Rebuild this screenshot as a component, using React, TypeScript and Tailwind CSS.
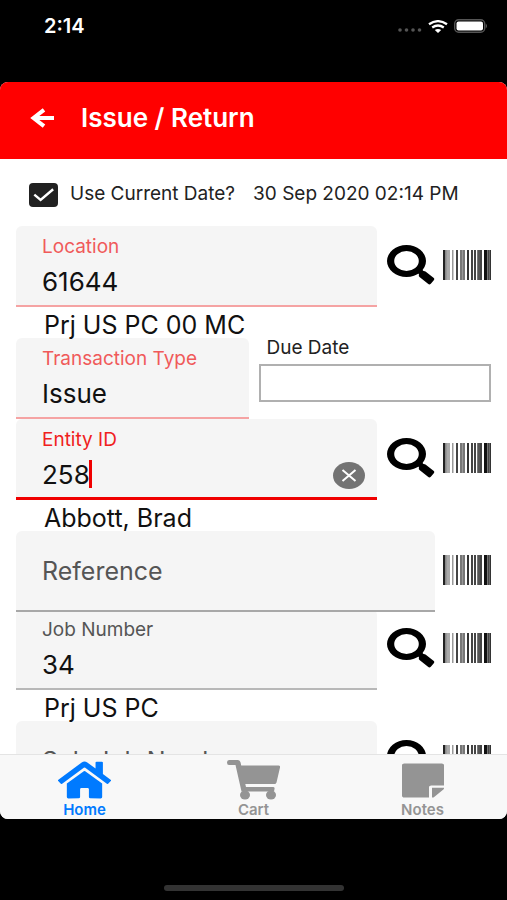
import { useId, type ReactNode } from "react";
import { FaHome, FaStickyNote } from "react-icons/fa";

const BARS: [number, number, string][] = [
  [0, 2, "#222"], [2, 1, "#888"], [3, 1, "#999"], [4, 1, "#aaa"], [5, 2, "#aaa"],
  [9, 1, "#999"], [10, 1, "#ccc"], [13, 2, "#444"], [17, 2, "#777"], [19, 1, "#999"], [20, 2, "#777"],
  [24, 2, "#333"], [28, 2, "#444"], [31, 2, "#444"], [34, 1, "#777"], [35, 2, "#555"], [37, 2, "#444"],
  [41, 3, "#111"], [44, 1, "#777"], [45, 1, "#444"], [46, 1, "#666"], [47, 1, "#333"],
];

function ScanButton({ name }: { name: string }) {
  return (
    <button type="button" aria-label={`Scan ${name}`} className="shrink-0">
      <svg width="48" height="30" viewBox="0 0 48 30" className="block" shapeRendering="crispEdges">
        {BARS.map(([x, w, fill]) => (
          <rect key={x} x={x} width={w} height="30" fill={fill} />
        ))}
      </svg>
    </button>
  );
}

function SearchButton({ name }: { name: string }) {
  return (
    <button type="button" aria-label={`Search ${name}`} className="shrink-0">
      <svg width="48" height="40" viewBox="0 0 48 40" className="block">
        <path
          fillRule="evenodd"
          d="M19.500 0A19.500 16 0 1 0 19.500 32A19.500 16 0 1 0 19.500 0ZM19.500 6A12.300 10 0 1 1 19.500 26A12.300 10 0 1 1 19.500 6Z"
        />
        <path d="M30 26.500L34 23.500L36.500 26Q37.500 25.800 38.500 26.500L46.800 33Q48 34 46.800 35.200L43.800 38.700Q42.500 40 41 38.800L32.500 32Q31.300 31 32 29.500Z" />
      </svg>
    </button>
  );
}

function CartIcon() {
  return (
    <svg width="53" height="40" viewBox="0 0 53 40" fill="currentColor">
      <path d="M2 0H11Q13 0 13.600 2.500L14.200 5.500H51.500Q53.500 5.500 53 7.500L49.500 22.500Q49 24 47.500 24H18.300L19 27H46Q48 27 47.500 29L47 31.500H14.500L8.500 5H2Q0 5 0 2.500Q0 0 2 0Z" />
      <ellipse cx="18" cy="35" rx="5" ry="4.500" />
      <ellipse cx="44" cy="35" rx="5" ry="4.500" />
    </svg>
  );
}

type FieldProps = {
  label: string;
  value: string;
  tone: string;
  line: string;
  children?: ReactNode;
};

function Field({ label, value, tone, line, children }: FieldProps) {
  const id = useId();
  return (
    <div className={`relative h-[81px] min-w-0 flex-1 rounded-t-md bg-[#f5f5f5] px-[26px] pt-[9px] ${line}`}>
      <label htmlFor={id} className={`block text-[19px] leading-6 ${tone}`}>{label}</label>
      <input
        id={id}
        defaultValue={value}
        className="mt-1.5 block h-8 w-full bg-transparent text-[26px] text-[#111] outline-none"
      />
      {children}
    </div>
  );
}

function EmptyField({ label }: { label: string }) {
  return (
    <input
      aria-label={label}
      placeholder={label}
      className="block h-[81px] min-w-0 flex-1 rounded-t-md border-b-2 border-[#a8a8a8] bg-[#f5f5f5] px-[26px] text-[25px] outline-none placeholder:text-[#555]"
    />
  );
}

function Actions({ name }: { name: string }) {
  return (
    <div className="flex h-[78px] items-center gap-2 pl-2.5">
      <SearchButton name={name} />
      <ScanButton name={name} />
    </div>
  );
}

function Caption({ children }: { children: ReactNode }) {
  return <p className="relative z-10 h-[31px] pl-7 text-[25px] leading-9 text-[#111]">{children}</p>;
}

function Tab({ label, tone, children }: { label: string; tone: string; children: ReactNode }) {
  return (
    <button type="button" className={`flex flex-1 flex-col items-center text-[15px] leading-4 font-semibold ${tone}`}>
      <span className="flex h-11 items-center">{children}</span>
      {label}
    </button>
  );
}

export default function App() {
  return (
    <div className="flex h-screen flex-col bg-black font-['Inter','Liberation_Sans',sans-serif]">
      <div className="flex h-[82px] shrink-0 items-start justify-between pt-3 pr-[19px] pl-11">
        <span className="text-xl leading-7 font-semibold text-white">2:14</span>
        <div className="flex h-7 items-center gap-1.5">
          <svg width="24" height="4" viewBox="0 0 24 4" className="mt-2" fill="#555">
            <circle cx="2" cy="2" r="1.800" /><circle cx="8.500" cy="2" r="1.800" /><circle cx="15" cy="2" r="1.800" /><circle cx="21.500" cy="2" r="1.800" />
          </svg>
          <svg width="20" height="13" viewBox="0 0 20 13" fill="none" stroke="#fff" strokeWidth="2.300">
            <path d="M1 4.300Q10-2 19 4.300M4.200 7.500Q10 3.500 15.800 7.500" />
            <path d="M6.800 10Q10 7.800 13.200 10L10 13Z" fill="#fff" stroke="none" />
          </svg>
          <svg width="34" height="14" viewBox="0 0 34 14">
            <rect x="0.700" y="0.700" width="30" height="12.600" rx="4" fill="none" stroke="#555" strokeWidth="1.400" />
            <rect x="2.500" y="2.500" width="26.500" height="9" rx="2" fill="#fff" />
            <path d="M31.800 4.500Q34 7 31.800 9.500Z" fill="#666" />
          </svg>
        </div>
      </div>

      <div className="flex min-h-0 flex-1 flex-col overflow-hidden rounded-lg bg-white">
        <header className="flex h-[77px] shrink-0 items-center bg-[#ff0000] pb-1.5 pl-[30px] text-white">
          <button type="button" aria-label="Back" className="mr-[26px]">
            <svg width="25" height="20" viewBox="0 0 25 20" className="block" fill="none" stroke="#fff" strokeWidth="4">
              <path d="M24 10H4M14 1.800L3.500 10L14 18.200" />
            </svg>
          </button>
          <h1 className="text-[26px] font-semibold">Issue / Return</h1>
        </header>

        <main className="min-h-0 flex-1 overflow-hidden px-4">
          <div className="flex h-[67px] items-center pt-1 pl-[13px] text-[19px] whitespace-nowrap text-[#222]">
            <label className="flex items-center gap-3">
              <span className="relative block h-6 w-[29px]">
                <input type="checkbox" defaultChecked className="block h-6 w-[29px] appearance-none rounded-sm bg-[#212121]" />
                <svg viewBox="0 0 30 24" className="pointer-events-none absolute inset-0" fill="none" stroke="#fff" strokeWidth="2.500">
                  <path d="M5.500 12L12 17.500L25 6.500" />
                </svg>
              </span>
              Use Current Date?
            </label>
            <span className="ml-[18px]">30 Sep 2020 02:14 PM</span>
          </div>

          <section className="flex items-start">
            <Field label="Location" value="61644" tone="text-[#f05a5a]" line="border-b-2 border-[#f5a3a3]" />
            <Actions name="location" />
          </section>
          <Caption>Prj US PC 00 MC</Caption>

          <section className="grid grid-cols-2 items-start gap-2.5">
            <Field label="Transaction Type" value="Issue" tone="text-[#f05a5a]" line="border-b-2 border-[#f5a3a3]" />
            <label className="flex min-w-0 flex-col text-[19px] leading-5 text-[#222]">
              <span className="pl-2">Due Date</span>
              <input className="mt-1.5 h-[38px] w-full border-2 border-[#b0b0b0] outline-none" />
            </label>
          </section>

          <section className="flex items-start">
            <Field label="Entity ID" value="258" tone="text-[#f02020]" line="border-b-3 border-[#f00000]">
              <span className="absolute top-[41px] left-[73px] h-7 w-[3px] bg-[#f00000]" />
              <button type="button" aria-label="Clear" className="absolute right-3 bottom-2">
                <svg width="32" height="27" viewBox="0 0 32 27" className="block">
                  <ellipse cx="16" cy="13.500" rx="16" ry="13.500" fill="#737373" />
                  <path d="M9.500 8L22.500 19M22.500 8L9.500 19" stroke="#fff" strokeWidth="2" />
                </svg>
              </button>
            </Field>
            <Actions name="entity" />
          </section>
          <Caption>Abbott, Brad</Caption>

          <section className="relative z-10 flex items-start gap-2">
            <EmptyField label="Reference" />
            <div className="flex h-[78px] items-center"><ScanButton name="reference" /></div>
          </section>

          <section className="-mt-[3px] flex items-start">
            <Field label="Job Number" value="34" tone="text-[#555]" line="border-b-2 border-[#b8b8b8]" />
            <Actions name="job number" />
          </section>
          <Caption>Prj US PC</Caption>

          <section className="flex items-start">
            <EmptyField label="Sub Job Number" />
            <Actions name="sub job number" />
          </section>
        </main>

        <nav className="relative z-20 flex h-[65px] shrink-0 border-t border-[#e4e4e4] bg-[#f8f8f8] pt-[3px]">
          <Tab label="Home" tone="text-[#007aff]">
            <FaHome preserveAspectRatio="none" className="h-[42px] w-[53px]" />
          </Tab>
          <Tab label="Cart" tone="text-[#949494]"><CartIcon /></Tab>
          <Tab label="Notes" tone="text-[#949494]">
            <FaStickyNote preserveAspectRatio="none" className="h-[39px] w-[42px]" />
          </Tab>
        </nav>
      </div>

      <div className="flex h-[81px] shrink-0 items-end justify-center pb-[9px]">
        <div className="h-1.5 w-[180px] rounded-full bg-[#333]" />
      </div>
    </div>
  );
}
